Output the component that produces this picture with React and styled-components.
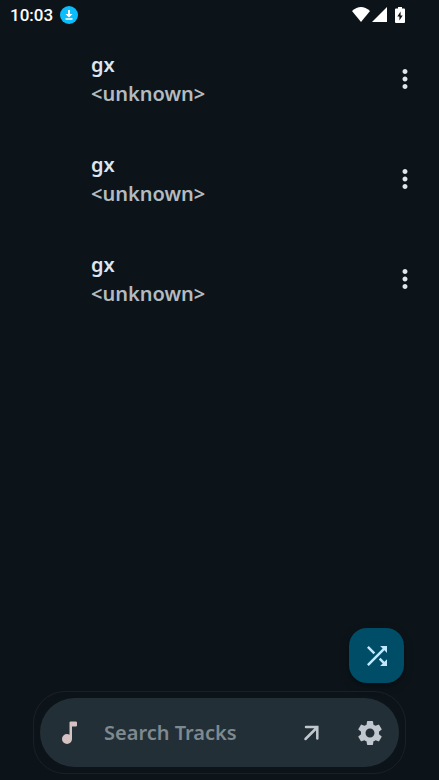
import React from "react";
import styled, { createGlobalStyle } from "styled-components";
import { MdMoreVert, MdSettings, MdShuffle } from "react-icons/md";

const GlobalStyle = createGlobalStyle`
  * { box-sizing: border-box; }
  body {
    margin: 0;
    background: #0c141a;
    font-family: "Noto Sans", "Open Sans", sans-serif;
  }
`;

const Screen = styled.div`
  display: flex;
  flex-direction: column;
  min-height: 100vh;
  background: #0c141a;
`;

const StatusBar = styled.header`
  display: flex;
  align-items: center;
  justify-content: space-between;
  height: 29px;
  padding: 0 34px 0 10px;
  color: #fff;
`;

const StatusGroup = styled.div`
  display: flex;
  align-items: center;
  gap: ${(p) => p.$gap}px;
`;

const Clock = styled.time`
  font: 500 17px/20px Roboto, sans-serif;
`;

const TrackList = styled.ul`
  flex: 1;
  margin: 0;
  padding: 0;
  list-style: none;
`;

const Track = styled.li`
  display: flex;
  align-items: center;
  justify-content: space-between;
  height: 100px;
  padding: 0 19px 0 91px;
`;

const TrackText = styled.div`
  display: flex;
  flex-direction: column;
`;

const Title = styled.span`
  font-size: 20px;
  font-weight: 600;
  line-height: 29px;
  color: #dfe5ec;
`;

const Artist = styled(Title)`
  color: #b4babf;
`;

const IconButton = styled.button`
  display: flex;
  flex: none;
  align-items: center;
  justify-content: center;
  width: 30px;
  height: 30px;
  padding: 0;
  border: 0;
  background: none;
  color: ${(p) => p.$color || "#c1c7ce"};
`;

const Footer = styled.footer`
  display: flex;
  flex-direction: column;
  gap: 8px;
  padding: 0 33px 6px;
`;

const ShuffleButton = styled.button`
  display: flex;
  align-items: center;
  align-self: flex-end;
  justify-content: center;
  width: 55px;
  height: 55px;
  margin-right: 2px;
  padding: 0;
  border: 0;
  border-radius: 18px;
  background: #004d68;
  color: #c0e8ff;
  box-shadow: 0 3px 8px rgba(0, 0, 0, 0.35);
`;

const SearchFrame = styled.div`
  padding: 6px;
  border: 1px solid #1b2026;
  border-radius: 32px;
`;

const SearchBar = styled.form`
  display: flex;
  align-items: center;
  height: 69px;
  padding: 0 14px 0 15px;
  border-radius: 35px;
  background: #232f36;
`;

const SearchInput = styled.input`
  flex: 1;
  min-width: 0;
  margin: 0 16px 0 19px;
  padding: 0;
  border: 0;
  outline: 0;
  background: none;
  color: #dfe5ec;
  font: 600 20px/28px "Noto Sans", "Open Sans", sans-serif;
  &::placeholder { color: #7e8990; opacity: 1; }
`;

const Actions = styled.div`
  display: flex;
  gap: 28px;
`;

const tracks = [
  { id: 1, title: "gx", artist: "<unknown>" },
  { id: 2, title: "gx", artist: "<unknown>" },
  { id: 3, title: "gx", artist: "<unknown>" },
];

const DownloadBadge = () => (
  <svg width="18" height="18" viewBox="0 0 18 18" aria-hidden="true">
    <circle cx="9" cy="9" r="9" fill="#0abdfc" />
    <path d="M8 4h2v4h2.500L9 11.500 5.500 8H8zM5.500 12.300h7v1.500h-7z" fill="#fff" />
  </svg>
);

const WifiIcon = () => (
  <svg width="18" height="15" viewBox="0 0 18 15" aria-hidden="true">
    <path d="M0 4Q9-4 18 4L9 15z" fill="#fff" />
  </svg>
);

const SignalIcon = () => (
  <svg width="15" height="15" viewBox="0 0 15 15" aria-hidden="true">
    <path d="M15 0v15H0z" fill="#fff" />
  </svg>
);

const BatteryIcon = () => (
  <svg width="10" height="16" viewBox="0 0 10 16" aria-hidden="true">
    <path d="M3 0h4v1.600h2q1 0 1 1V15q0 1-1 1H1q-1 0-1-1V2.600q0-1 1-1h2z" fill="#fff" />
    <path d="M5.600 4.500L2.300 9.600h2.100v4l3.300-5.100H5.600z" fill="#0c141a" />
  </svg>
);

const NoteIcon = () => (
  <svg width="30" height="30" viewBox="0 0 24 24" fill="#d5c2c3" aria-hidden="true">
    <path d="M9.600 20.800q-1.650 0-2.825-1.175T5.600 16.800t1.175-2.825T9.600 12.800q.575 0 1.063.138t.937.412V3.800q0-.425.288-.712T12.600 2.800h4q.425 0 .713.288t.287.712v2q0 .425-.288.713T16.600 6.800h-3v10q0 1.650-1.175 2.825T9.600 20.800z" />
  </svg>
);

const ArrowIcon = () => (
  <svg width="30" height="30" viewBox="0 0 30 30" aria-hidden="true">
    <path d="M8.500 21L20 9.500M9 9h11.300v11.500" fill="none" stroke="currentColor" strokeWidth="2.500" strokeLinecap="round" strokeLinejoin="miter" />
  </svg>
);

export default function App() {
  return (
    <Screen>
      <GlobalStyle />
      <StatusBar>
        <StatusGroup $gap={7}>
          <Clock>10:03</Clock>
          <DownloadBadge />
        </StatusGroup>
        <StatusGroup $gap={8}>
          <StatusGroup $gap={2}>
            <WifiIcon />
            <SignalIcon />
          </StatusGroup>
          <BatteryIcon />
        </StatusGroup>
      </StatusBar>
      <TrackList>
        {tracks.map((track) => (
          <Track key={track.id}>
            <TrackText>
              <Title>{track.title}</Title>
              <Artist>{track.artist}</Artist>
            </TrackText>
            <IconButton type="button" aria-label="Track options" $color="#dfe5ec">
              <MdMoreVert size={30} />
            </IconButton>
          </Track>
        ))}
      </TrackList>
      <Footer>
        <ShuffleButton type="button" aria-label="Shuffle">
          <MdShuffle size={30} />
        </ShuffleButton>
        <SearchFrame>
          <SearchBar role="search" onSubmit={(e) => e.preventDefault()}>
            <NoteIcon />
            <SearchInput type="text" aria-label="Search Tracks" placeholder="Search Tracks" />
            <Actions>
              <IconButton type="button" aria-label="Open">
                <ArrowIcon />
              </IconButton>
              <IconButton type="button" aria-label="Settings">
                <MdSettings size={30} />
              </IconButton>
            </Actions>
          </SearchBar>
        </SearchFrame>
      </Footer>
    </Screen>
  );
}
